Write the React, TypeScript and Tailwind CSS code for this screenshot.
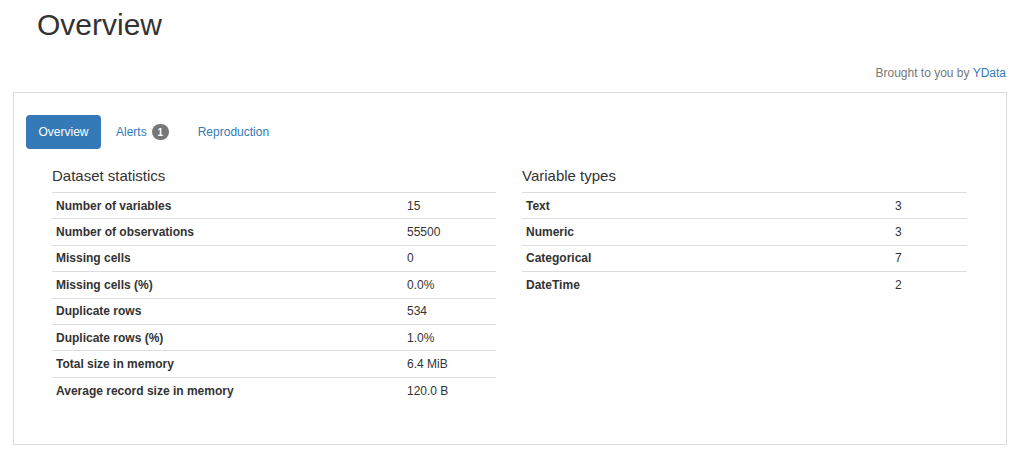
import React from 'react';

const stats: [string, string][] = [
  ['Number of variables', '15'],
  ['Number of observations', '55500'],
  ['Missing cells', '0'],
  ['Missing cells (%)', '0.0%'],
  ['Duplicate rows', '534'],
  ['Duplicate rows (%)', '1.0%'],
  ['Total size in memory', '6.4 MiB'],
  ['Average record size in memory', '120.0 B'],
];

const types: [string, string][] = [
  ['Text', '3'],
  ['Numeric', '3'],
  ['Categorical', '7'],
  ['DateTime', '2'],
];

function StatTable({ title, rows, labelWidth }: { title: string; rows: [string, string][]; labelWidth: string }) {
  return (
    <div className="flex flex-col">
      <h2 className="text-[15px] leading-[17px] text-[#333] h-[26px] pt-[1px]">{title}</h2>
      <table className="w-full border-collapse text-[12px] text-[#333]">
        <tbody>
          {rows.map(([label, value]) => (
            <tr key={label} className="border-t border-[#ddd] h-[26.4px]">
              <th className={`${labelWidth} text-left font-bold px-[4px] align-middle`}>{label}</th>
              <td className="px-[4px] align-middle">{value}</td>
            </tr>
          ))}
        </tbody>
      </table>
    </div>
  );
}

export default function App() {
  return (
    <div className="bg-white w-[1024px] h-[461px] overflow-hidden" style={{ fontFamily: '"Liberation Sans", Arial, sans-serif' }}>
      <div className="pl-[37px] pt-[8px] h-[42px]">
        <h1 className="text-[30px] leading-[33px] text-[#333]">Overview</h1>
      </div>
      <div className="flex justify-end pr-[18px] pt-[24px] h-[50px] text-[12px] text-[#777] leading-[14px]">
        <span>
          Brought to you by <span className="text-[#337ab7]">YData</span>
        </span>
      </div>
      <div className="mx-[13px] w-[994px] h-[353px] border border-[#ddd] px-[12px] pt-[22px]">
        <div className="flex items-center h-[34px] text-[12px]">
          <div className="h-[34px] px-[12.5px] flex items-center rounded-[4px] bg-[#337ab7] text-white">Overview</div>
          <div className="ml-[2px] h-[34px] px-[13px] flex items-center text-[#337ab7]">
            Alerts
            <span className="ml-[5px] inline-flex items-center justify-center w-[17px] h-[16px] rounded-full bg-[#777] text-white text-[10px] font-bold">1</span>
          </div>
          <div className="ml-[2px] h-[34px] px-[14px] flex items-center text-[#337ab7]">Reproduction</div>
        </div>
        <div className="flex gap-[26px] pl-[26px] pt-[17px]">
          <div className="w-[444px]">
            <StatTable title="Dataset statistics" rows={stats} labelWidth="w-[351px]" />
          </div>
          <div className="w-[445px]">
            <StatTable title="Variable types" rows={types} labelWidth="w-[369px]" />
          </div>
        </div>
      </div>
    </div>
  );
}
